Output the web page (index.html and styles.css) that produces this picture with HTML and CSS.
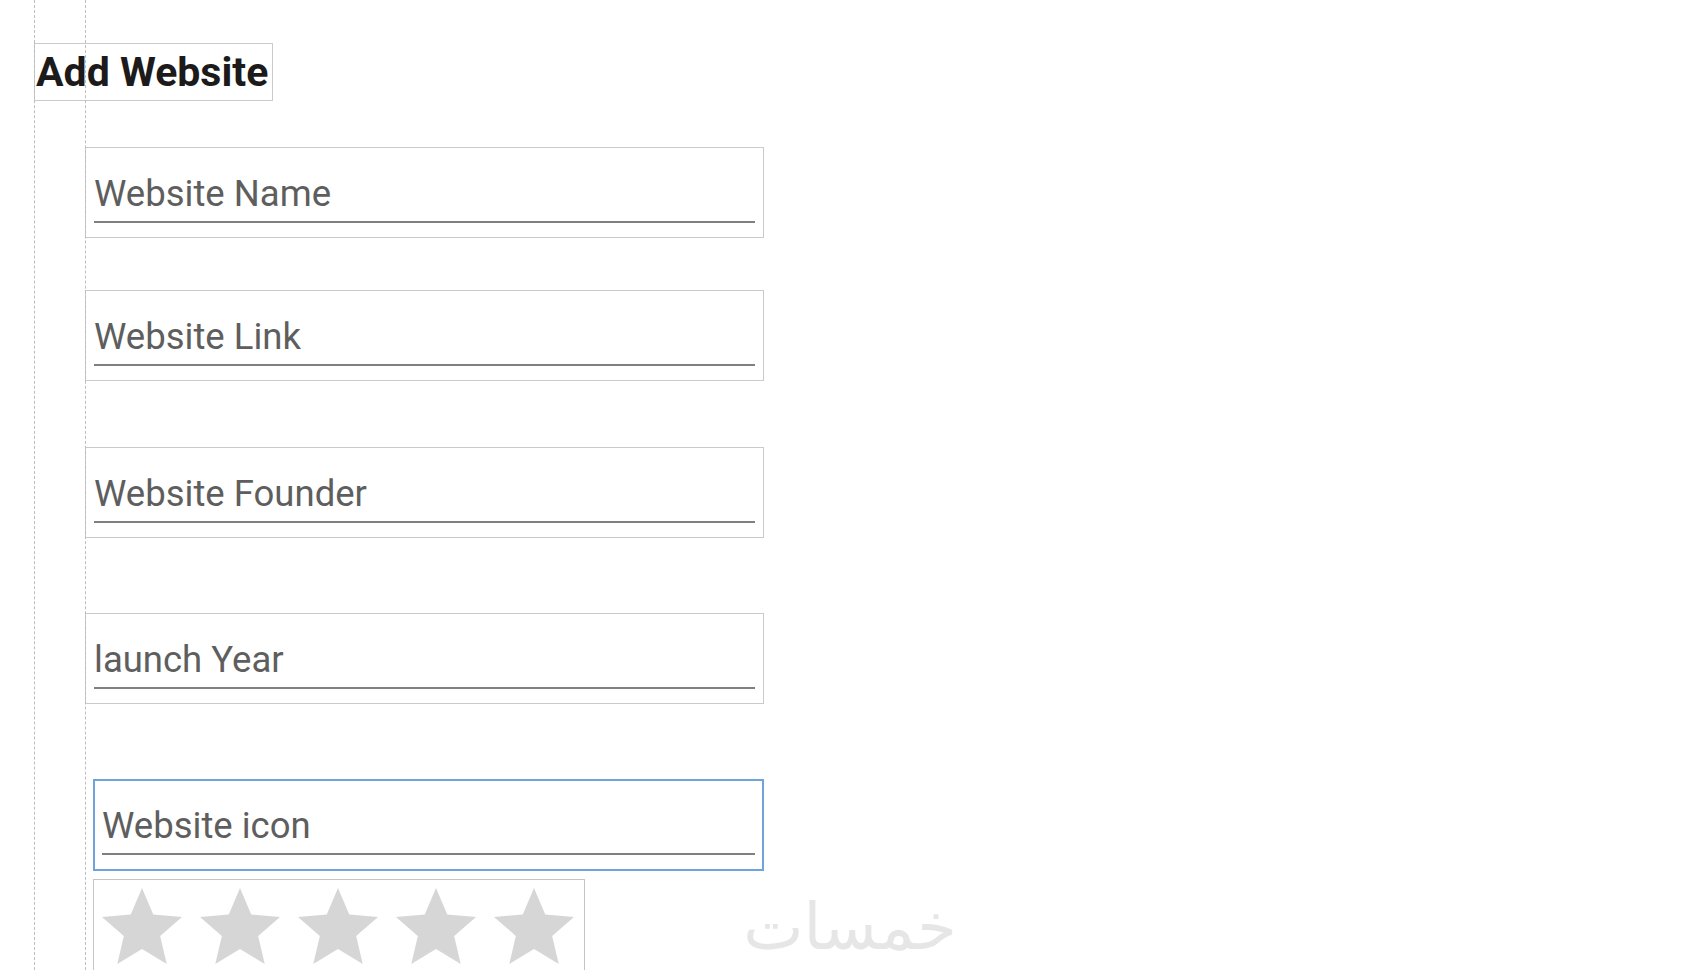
FILE: index.html
```html
<!DOCTYPE html>
<html lang="en">
<head>
    <meta charset="UTF-8">
    <meta name="viewport" content="width=device-width, initial-scale=1.0">
    <title>Add Website</title>
    <link rel="stylesheet" href="styles.css">
</head>
<body>
    <!-- layout guides of the designer preview -->
    <div class="guide guide-outer"></div>
    <div class="guide guide-inner"></div>

    <div class="screen">
        <h1 class="title">Add Website</h1>

        <form class="form">
            <div class="field field-name">
                <div class="field-text">Website Name</div>
                <div class="field-line"></div>
            </div>

            <div class="field field-link">
                <div class="field-text">Website Link</div>
                <div class="field-line"></div>
            </div>

            <div class="field field-founder">
                <div class="field-text">Website Founder</div>
                <div class="field-line"></div>
            </div>

            <div class="field field-year">
                <div class="field-text">launch Year</div>
                <div class="field-line"></div>
            </div>

            <div class="field field-icon selected">
                <div class="field-text">Website icon</div>
                <div class="field-line"></div>
            </div>

            <div class="rating">
                <svg class="star" viewBox="0 0 24 24"><path d="M12 17.27L18.18 21l-1.64-7.03L22 9.24l-7.19-.61L12 2 9.19 8.63 2 9.24l5.46 4.73L5.82 21z"/></svg>
                <svg class="star" viewBox="0 0 24 24"><path d="M12 17.27L18.18 21l-1.64-7.03L22 9.24l-7.19-.61L12 2 9.19 8.63 2 9.24l5.46 4.73L5.82 21z"/></svg>
                <svg class="star" viewBox="0 0 24 24"><path d="M12 17.27L18.18 21l-1.64-7.03L22 9.24l-7.19-.61L12 2 9.19 8.63 2 9.24l5.46 4.73L5.82 21z"/></svg>
                <svg class="star" viewBox="0 0 24 24"><path d="M12 17.27L18.18 21l-1.64-7.03L22 9.24l-7.19-.61L12 2 9.19 8.63 2 9.24l5.46 4.73L5.82 21z"/></svg>
                <svg class="star" viewBox="0 0 24 24"><path d="M12 17.27L18.18 21l-1.64-7.03L22 9.24l-7.19-.61L12 2 9.19 8.63 2 9.24l5.46 4.73L5.82 21z"/></svg>
            </div>
        </form>
    </div>

    <div class="watermark" lang="ar" dir="rtl">خمسات</div>
</body>
</html>
```

FILE: styles.css
```css
:root {
    --guide-color: #bdbdbd;
    --box-border: #cacaca;
    --hint-color: #5e5e5e;
    --line-color: #808080;
    --focus-color: #6fa3dc;
    --star-color: #d6d6d6;
}

html, body {
    height: 100%;
}

body {
    margin: 0;
    background-color: #ffffff;
    font-family: Roboto, 'Liberation Sans', Arial, sans-serif;
    overflow: hidden;
}

.guide {
    position: absolute;
    top: 0;
    bottom: 0;
    width: 0;
    border-left: 1px dashed var(--guide-color);
    z-index: 2;
    pointer-events: none;
}

.guide-outer {
    left: 34px;
}

.guide-inner {
    left: 85px;
}

.screen {
    padding: 43px 0 0 34px;
}

.title {
    display: inline-block;
    margin: 0;
    padding: 4px 4px 4px 1px;
    border: 1px solid var(--box-border);
    font-size: 41px;
    line-height: 48px;
    font-weight: 700;
    color: #1c1a1a;
}

.form {
    display: flex;
    flex-direction: column;
    align-items: flex-start;
    margin: 46px 0 0 51px;
}

.field {
    box-sizing: border-box;
    width: 679px;
    height: 91px;
    padding: 25px 8px 0;
    border: 1px solid var(--box-border);
}

.field-text {
    height: 42px;
    font-size: 36.5px;
    line-height: 42px;
    color: var(--hint-color);
}

.field-line {
    margin-top: 6px;
    height: 2px;
    background-color: var(--line-color);
}

.field-link {
    margin-top: 52px;
}

.field-founder {
    margin-top: 66px;
}

.field-year {
    margin-top: 75px;
}

.field-icon {
    margin-top: 75px;
    margin-left: 8px;
    width: 671px;
}

.field.selected {
    height: 92px;
    border: 2px solid var(--focus-color);
    padding: 24px 7px 0;
}

.rating {
    display: flex;
    gap: 2px;
    margin: 8px 0 0 8px;
    padding-right: 2px;
    height: 110px;
    border: 1px solid #c4c4c4;
}

.star {
    width: 96px;
    height: 96px;
    fill: var(--star-color);
}

.watermark {
    position: absolute;
    left: 740px;
    top: 892px;
    width: 220px;
    text-align: center;
    font-family: 'DejaVu Sans', sans-serif;
    font-size: 64px;
    line-height: 70px;
    color: #e6e6e6;
}
```
